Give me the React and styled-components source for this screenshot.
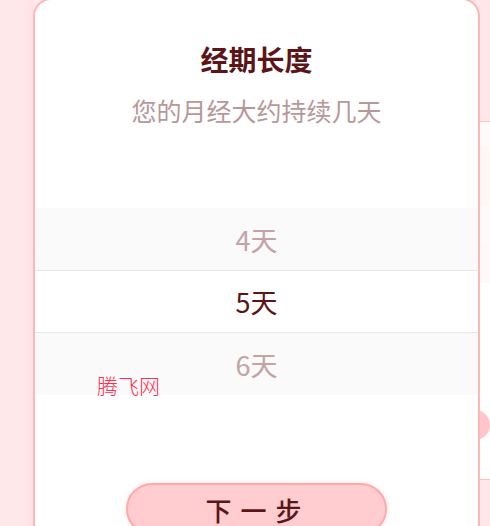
import React from "react";
import styled, { createGlobalStyle } from "styled-components";

const Global = createGlobalStyle`
  html, body { margin: 0; padding: 0; }
  body {
    background: #ffe8ea;
    font-family: "Noto Sans CJK SC", "Noto Sans", sans-serif;
    overflow: hidden;
  }
`;

const Screen = styled.div`
  display: flex;
  width: 490px;
  height: 526px;
  overflow: hidden;
  background: #ffe8ea;
`;

const Gutter = styled.div`
  width: 33px;
  flex: none;
  background: linear-gradient(90deg, #ffe8ea 0%, #ffe8ea 70%, #ffe1e4 100%);
`;

const Card = styled.div`
  position: relative;
  flex: none;
  width: 447px;
  height: 600px;
  margin-top: -2px;
  box-sizing: border-box;
  background: #ffffff;
  border: 2px solid #ffb6b8;
  border-radius: 18px;
  display: flex;
  flex-direction: column;
  align-items: center;
`;

const Title = styled.h2`
  margin: 42px 0 0;
  font-size: 28px;
  line-height: 34px;
  font-weight: 700;
  color: #5b1518;
`;

const Subtitle = styled.p`
  margin: 16px 0 0;
  font-size: 25px;
  line-height: 36px;
  font-weight: 400;
  color: #b8979a;
`;

const Picker = styled.div`
  margin-top: 80px;
  width: 100%;
  display: flex;
  flex-direction: column;
`;

const Item = styled.div`
  height: ${(p) => (p.$active ? "61px" : "62px")};
  display: flex;
  align-items: center;
  justify-content: center;
  font-size: 27px;
  background: ${(p) => (p.$active ? "#ffffff" : "#fafafa")};
  color: ${(p) => (p.$active ? "#5b1518" : "#c2a3a6")};
  border-top: ${(p) => (p.$active ? "1px solid #e9e6e6" : "none")};
  border-bottom: ${(p) => (p.$active ? "1px solid #e9e6e6" : "none")};
`;

const Button = styled.button`
  margin-top: 88px;
  width: 261px;
  height: 52px;
  flex: none;
  box-sizing: border-box;
  background: #ffccd0;
  border: 2px solid #ffaaaa;
  border-radius: 26px;
  font-family: "Noto Sans CJK SC", sans-serif;
  font-size: 26px;
  font-weight: 500;
  letter-spacing: 9px;
  padding-left: 9px;
  color: #5b1518;
  box-shadow: 0 0 6px rgba(255, 170, 170, 0.25);
`;

const Watermark = styled.span`
  position: absolute;
  left: 62px;
  top: 372px;
  font-family: "Noto Sans CJK SC", sans-serif;
  font-size: 21px;
  line-height: 26px;
  font-weight: 300;
  color: #ff2d4e;
`;

const Side = styled.div`
  flex: 1;
  display: flex;
  flex-direction: column;
`;

const SideBlock = styled.div`
  height: ${(p) => p.$h}px;
  flex: none;
  background: ${(p) => p.$bg};
  border-bottom: ${(p) => (p.$line ? "1px solid #ffc0c2" : "none")};
  display: flex;
  align-items: center;
`;

const Knob = styled.div`
  width: 30px;
  height: 30px;
  margin-left: -20px;
  border-radius: 50%;
  background: #ffc6ca;
`;

export default function App() {
  return (
    <>
      <Global />
      <Screen>
        <Gutter />
        <Card>
          <Title>经期长度</Title>
          <Subtitle>您的月经大约持续几天</Subtitle>
          <Picker>
            <Item>4天</Item>
            <Item $active>5天</Item>
            <Item>6天</Item>
          </Picker>
          <Button>下一步</Button>
          <Watermark>腾飞网</Watermark>
        </Card>
        <Side>
          <SideBlock $h={121} $bg="#ffe6e8" $line />
          <SideBlock $h={24} $bg="#fffafa" />
          <SideBlock $h={60} $bg="#fff6f6" />
          <SideBlock $h={40} $bg="#fffafa" />
          <SideBlock $h={37} $bg="#fff8f8" />
          <SideBlock $h={127} $bg="#ffffff" />
          <SideBlock $h={30} $bg="#ffffff">
            <Knob />
          </SideBlock>
          <SideBlock $h={39} $bg="#ffffff" $line />
          <SideBlock $h={60} $bg="#ffe6e8" />
        </Side>
      </Screen>
    </>
  );
}
